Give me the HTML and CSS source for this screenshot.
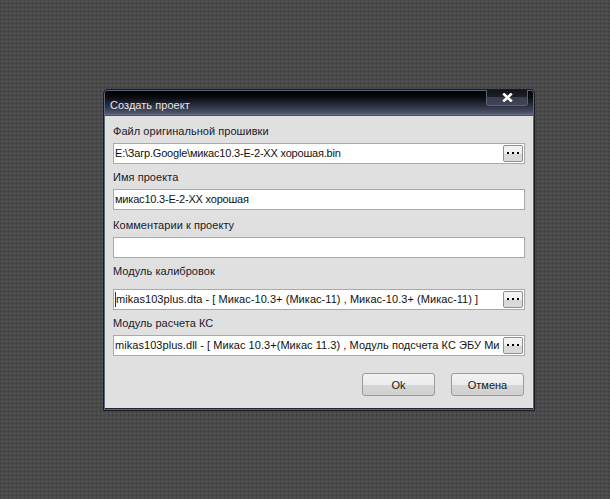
FILE: index.html
```html
<!DOCTYPE html>
<html lang="ru">
<head>
<meta charset="utf-8">
<title>Создать проект</title>
<link rel="stylesheet" href="styles.css">
</head>
<body>
<div class="dialog">
  <div class="titlebar">
    <span class="title">Создать проект</span>
    <span class="close"><svg width="11" height="9" viewBox="0 0 11 9"><path d="M1.2 0.5L9.8 8.5M9.8 0.5L1.2 8.5" stroke="#fff" stroke-width="2.6" fill="none"/></svg></span>
  </div>
  <div class="body">
    <div class="field first">
      <div class="label">Файл оригинальной прошивки</div>
      <div class="input"><span class="value tight">E:\Загр.Google\микас10.3-E-2-XX хорошая.bin</span><span class="dots"><svg width="12" height="3" viewBox="0 0 12 3"><path d="M0 0h2v2H0zM5 0h2v2H5zM10 0h2v2h-2z" fill="#000"/></svg></span></div>
    </div>
    <div class="field second">
      <div class="label">Имя проекта</div>
      <div class="input"><span class="value tight">микас10.3-E-2-XX хорошая</span></div>
    </div>
    <div class="field gap2">
      <div class="label">Комментарии к проекту</div>
      <div class="input"><span class="value"></span></div>
    </div>
    <div class="field calib">
      <div class="label">Модуль калибровок</div>
      <div class="input tall"><span class="value caret">mikas103plus.dta - [ Микас-10.3+ (Микас-11) , Микас-10.3+ (Микас-11) ]</span><span class="dots"><svg width="12" height="3" viewBox="0 0 12 3"><path d="M0 0h2v2H0zM5 0h2v2H5zM10 0h2v2h-2z" fill="#000"/></svg></span></div>
    </div>
    <div class="field gap3">
      <div class="label">Модуль расчета КС</div>
      <div class="input"><span class="value">mikas103plus.dll - [ Микас 10.3+(Микас 11.3) , Модуль подсчета КС ЭБУ Микас 10.3</span><span class="dots"><svg width="12" height="3" viewBox="0 0 12 3"><path d="M0 0h2v2H0zM5 0h2v2H5zM10 0h2v2h-2z" fill="#000"/></svg></span></div>
    </div>
    <div class="actions">
      <button class="btn">Ok</button>
      <button class="btn">Отмена</button>
    </div>
  </div>
</div>
</body>
</html>
```
FILE: styles.css
```css
* { box-sizing: border-box; }
html, body { margin: 0; height: 100%; overflow: hidden; }
body {
  background-color: #4a4a4a;
  background-image:
    linear-gradient(45deg, #404040 25%, transparent 25%, transparent 75%, #404040 75%),
    linear-gradient(45deg, #555 25%, transparent 25%, transparent 75%, #555 75%);
  background-size: 4px 4px;
  background-position: 0 0, 2px 2px;
  padding: 89px 0 0 103px;
  font-family: "Liberation Sans", sans-serif;
  font-size: 11px;
  letter-spacing: 0.05px;
  color: #1a1a2a;
}
.dialog {
  width: 432px;
  height: 322px;
  background: #22252f;
  border: 1px solid #191b22;
  border-radius: 5px 5px 0 0;
  box-shadow: inset 0 0 0 1px #5b6480;
  padding: 1px 1px 2px 1px;
  display: flex;
  flex-direction: column;
}
.titlebar {
  height: 25px;
  flex: none;
  padding: 8px 0 0 5px;
  display: flex;
  justify-content: space-between;
  align-items: flex-start;
  background: linear-gradient(#000 0, #0a0b0f 25%, #2c3040 60%, #4c5369 88%, #6a7288 96%, #2a2d38 100%);
  border-radius: 3px 3px 0 0;
  position: relative;
}
.title { color: #e6e6e6; line-height: 13px; }
.close {
  position: absolute;
  right: 5px;
  top: -1px;
  width: 42px;
  height: 16px;
  background: linear-gradient(#14151b 0, #1d1f27 45%, #3a3f50 50%, #3f4456 100%);
  border: 1px solid #5a6076;
  border-top: 0;
  border-radius: 0 0 3px 3px;
  display: flex;
  align-items: center;
  justify-content: center;
}
.body {
  flex: 1;
  background: #e0e0e0;
  padding: 0 8px;
  display: flex;
  flex-direction: column;
}
.field { display: flex; flex-direction: column; }
.label { height: 25px; padding-top: 6px; line-height: 14px; white-space: nowrap; }
.first .label { height: 27px; padding-top: 8px; }
.gap2 .label { height: 27px; padding-top: 8px; }
.calib .label { height: 26px; }
.input {
  height: 21px;
  background: #fff;
  border: 1px solid #a9a9a9;
  display: flex;
  align-items: center;
  padding: 0 1px;
  overflow: hidden;
  color: #111;
}
.tall { margin-top: 5px; }
.value { flex: 1; min-width: 0; white-space: nowrap; overflow: hidden; line-height: 15px; }
.tight { letter-spacing: -0.2px; }
.caret { padding-left: 1px; box-shadow: inset 1px 0 0 #333; }
.dots {
  flex: none;
  width: 20px;
  height: 17px;
  margin-left: 3px;
  border: 1px solid #8f8f8f;
  border-radius: 2px;
  background: linear-gradient(#f4f4f4 0, #f0f0f0 50%, #d8d8d8 52%, #dcdcdc 100%);
  display: flex;
  justify-content: center;
  padding-top: 6px;
}
.dots svg { display: block; }
.actions {
  margin-top: 17px;
  display: flex;
  justify-content: flex-end;
  gap: 16px;
  padding-right: 1px;
}
.btn {
  width: 73px;
  height: 23px;
  padding: 0;
  border: 1px solid #9a9a9a;
  border-radius: 3px;
  background: linear-gradient(#f2f2f2 0, #ececec 50%, #d6d6d6 55%, #d0d0d0 100%);
  font: inherit;
  color: #1a1a1a;
}
```
